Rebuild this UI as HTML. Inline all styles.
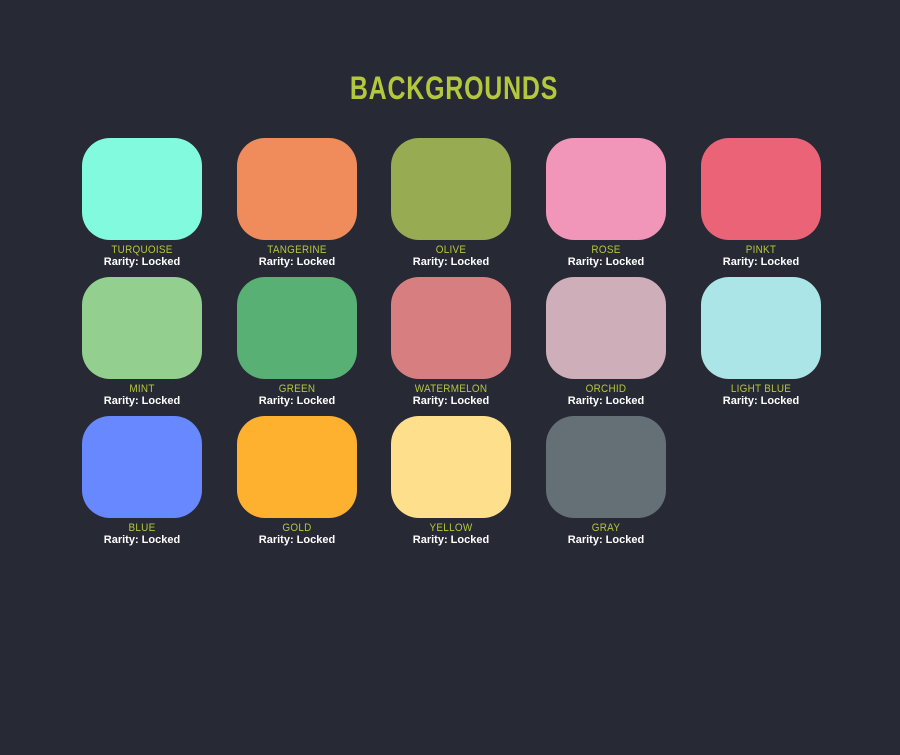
<!DOCTYPE html>
<html><head><style>
body{margin:0;width:900px;height:755px;background:#272935;font-family:"Liberation Sans",sans-serif;position:relative;overflow:hidden}
h1{position:absolute;top:70px;left:0;width:908px;text-align:center;margin:0;color:#b3c83c;font-family:"Liberation Sans",sans-serif;font-size:32px;letter-spacing:1px;font-weight:bold;transform:scaleX(0.78)}
.c{position:absolute;width:120px;text-align:center}
.t{width:120px;height:102px;border-radius:28px}
.n{color:#b3c83c;font-size:11px;letter-spacing:0.3px;margin-top:5px;line-height:11px;text-transform:uppercase;transform:scaleX(0.9)}
.r{color:#fff;font-size:11px;font-weight:bold;line-height:13px}
</style></head><body>
<h1>BACKGROUNDS</h1>
<div class="c" style="left:82px;top:138px"><div class="t" style="background:#81fadd"></div><div class="n">Turquoise</div><div class="r">Rarity: Locked</div></div>
<div class="c" style="left:237px;top:138px"><div class="t" style="background:#f08c5c"></div><div class="n">Tangerine</div><div class="r">Rarity: Locked</div></div>
<div class="c" style="left:391px;top:138px"><div class="t" style="background:#97ab53"></div><div class="n">Olive</div><div class="r">Rarity: Locked</div></div>
<div class="c" style="left:546px;top:138px"><div class="t" style="background:#f196b8"></div><div class="n">Rose</div><div class="r">Rarity: Locked</div></div>
<div class="c" style="left:701px;top:138px"><div class="t" style="background:#ea6377"></div><div class="n">Pinkt</div><div class="r">Rarity: Locked</div></div>
<div class="c" style="left:82px;top:277px"><div class="t" style="background:#93cf8f"></div><div class="n">Mint</div><div class="r">Rarity: Locked</div></div>
<div class="c" style="left:237px;top:277px"><div class="t" style="background:#59b074"></div><div class="n">Green</div><div class="r">Rarity: Locked</div></div>
<div class="c" style="left:391px;top:277px"><div class="t" style="background:#d77f80"></div><div class="n">Watermelon</div><div class="r">Rarity: Locked</div></div>
<div class="c" style="left:546px;top:277px"><div class="t" style="background:#cdaeb9"></div><div class="n">Orchid</div><div class="r">Rarity: Locked</div></div>
<div class="c" style="left:701px;top:277px"><div class="t" style="background:#abe5e7"></div><div class="n">Light Blue</div><div class="r">Rarity: Locked</div></div>
<div class="c" style="left:82px;top:416px"><div class="t" style="background:#6788fe"></div><div class="n">Blue</div><div class="r">Rarity: Locked</div></div>
<div class="c" style="left:237px;top:416px"><div class="t" style="background:#feb02f"></div><div class="n">Gold</div><div class="r">Rarity: Locked</div></div>
<div class="c" style="left:391px;top:416px"><div class="t" style="background:#fedf8c"></div><div class="n">Yellow</div><div class="r">Rarity: Locked</div></div>
<div class="c" style="left:546px;top:416px"><div class="t" style="background:#646f76"></div><div class="n">Gray</div><div class="r">Rarity: Locked</div></div>
</body></html>
